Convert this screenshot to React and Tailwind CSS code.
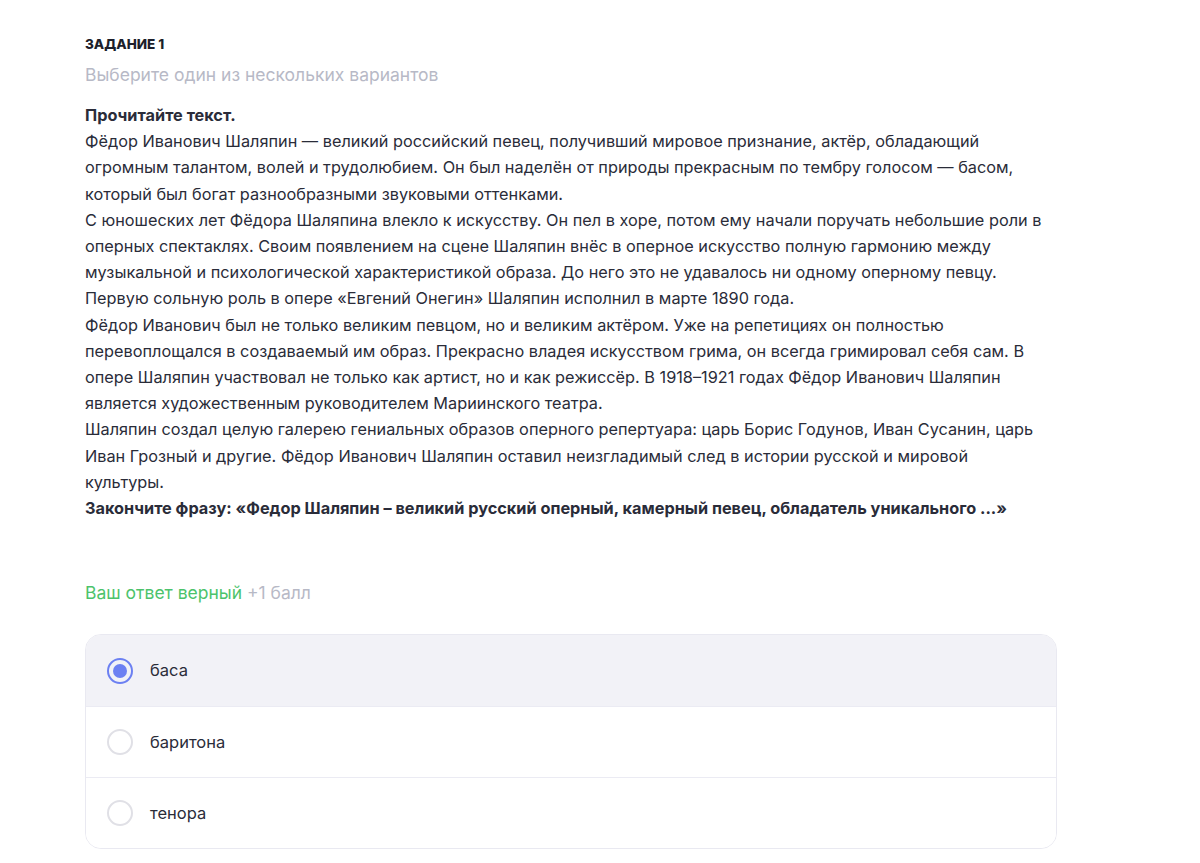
const paragraphs = [
  [
    'Фёдор Иванович Шаляпин — великий российский певец, получивший мировое признание, актёр, обладающий',
    'огромным талантом, волей и трудолюбием. Он был наделён от природы прекрасным по тембру голосом — басом,',
    'который был богат разнообразными звуковыми оттенками.',
  ],
  [
    'С юношеских лет Фёдора Шаляпина влекло к искусству. Он пел в хоре, потом ему начали поручать небольшие роли в',
    'оперных спектаклях. Своим появлением на сцене Шаляпин внёс в оперное искусство полную гармонию между',
    'музыкальной и психологической характеристикой образа. До него это не удавалось ни одному оперному певцу.',
    'Первую сольную роль в опере «Евгений Онегин» Шаляпин исполнил в марте 1890 года.',
  ],
  [
    'Фёдор Иванович был не только великим певцом, но и великим актёром. Уже на репетициях он полностью',
    'перевоплощался в создаваемый им образ. Прекрасно владея искусством грима, он всегда гримировал себя сам. В',
    'опере Шаляпин участвовал не только как артист, но и как режиссёр. В 1918–1921 годах Фёдор Иванович Шаляпин',
    'является художественным руководителем Мариинского театра.',
  ],
  [
    'Шаляпин создал целую галерею гениальных образов оперного репертуара: царь Борис Годунов, Иван Сусанин, царь',
    'Иван Грозный и другие. Фёдор Иванович Шаляпин оставил неизгладимый след в истории русской и мировой',
    'культуры.',
  ],
];

const options = [
  { label: 'баса', checked: true },
  { label: 'баритона', checked: false },
  { label: 'тенора', checked: false },
];

export default function App() {
  return (
    <div className="min-h-screen bg-white font-['Inter',sans-serif] text-[#2a2c39]">
      <div className="w-[972px] ml-[85px] pt-[35px]">
        {/* Заголовок задания */}
        <h2 className="text-[13.5px] font-extrabold leading-[18px] text-[#1d1f2b]">ЗАДАНИЕ 1</h2>
        <p className="mt-[10px] text-[17.5px] leading-[24px] text-[#b7b9c6]">Выберите один из нескольких вариантов</p>

        {/* Текст задания */}
        <div className="mt-[15px] text-[16.3px] leading-[26.2px] whitespace-nowrap">
          <p className="font-bold">Прочитайте текст.</p>
          {paragraphs.map((lines, i) => (
            <p key={i}>
              {lines.map((line, j) => (
                <span key={j} className="block">{line}</span>
              ))}
            </p>
          ))}
          <p className="font-bold">Закончите фразу: «Федор Шаляпин – великий русский оперный, камерный певец, обладатель уникального ...»</p>
        </div>

        {/* Результат */}
        <p className="mt-[60px] text-[17.5px] leading-[24px]">
          <span className="text-[#4cc36b]">Ваш ответ верный</span>{' '}
          <span className="text-[#b7b9c6]">+1 балл</span>
        </p>

        {/* Варианты ответа */}
        <div className="mt-[29px] rounded-[16px] border border-[#e9e9f1] overflow-hidden">
          {options.map((opt, i) => (
            <div
              key={opt.label}
              className={`flex items-center h-[71px] px-[21px] gap-[17px] ${
                i > 0 ? 'border-t border-[#ebebf3]' : ''
              } ${opt.checked ? 'bg-[#f2f2f7]' : 'bg-white'}`}
            >
              {opt.checked ? (
                <span className="w-[26px] h-[26px] rounded-full border-[2.5px] border-[#6c80f2] flex items-center justify-center">
                  <span className="w-[14px] h-[14px] rounded-full bg-[#6c80f2]" />
                </span>
              ) : (
                <span className="w-[26px] h-[26px] rounded-full border-2 border-[#e0e0e6]" />
              )}
              <span className="text-[16.5px] text-[#2a2c39]">{opt.label}</span>
            </div>
          ))}
        </div>
      </div>
    </div>
  );
}
